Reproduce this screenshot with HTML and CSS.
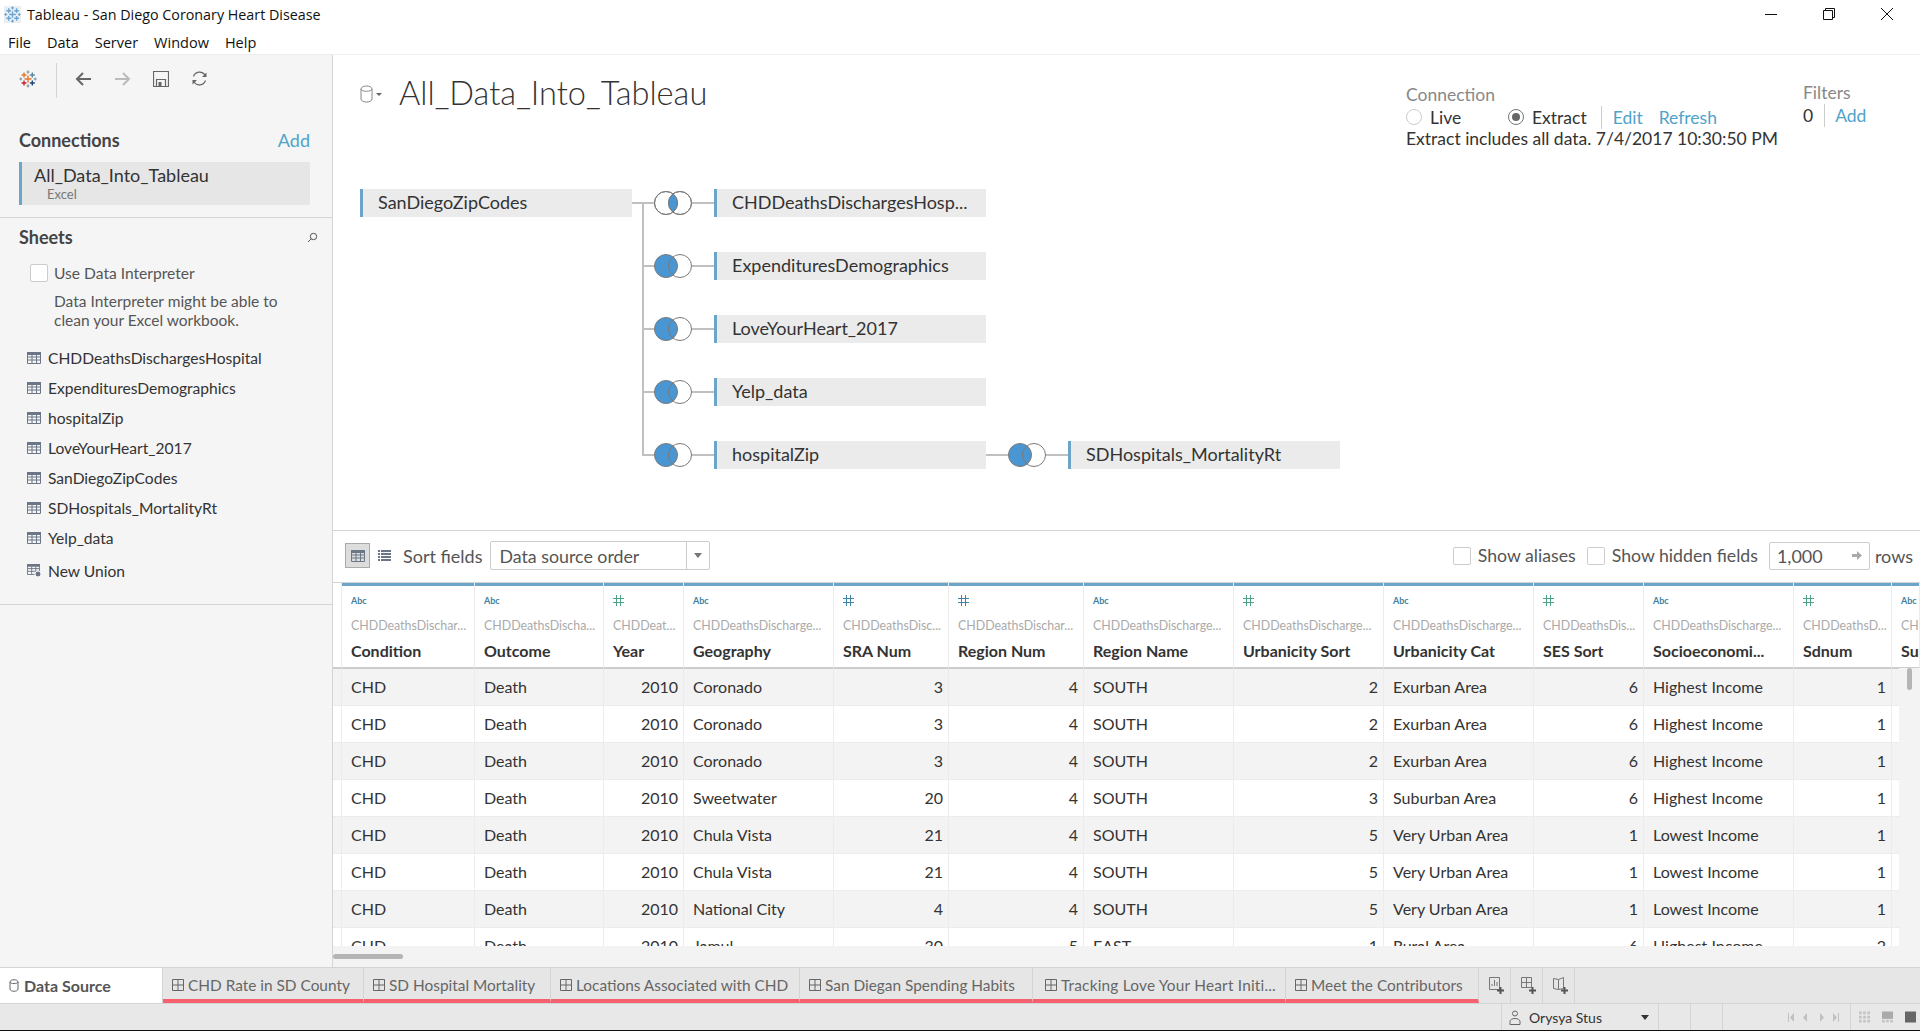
FILE: index.html
```html
<!DOCTYPE html>
<html lang="en">
<head>
    <meta charset="UTF-8">
    <title>Tableau - San Diego Coronary Heart Disease</title>
    <link rel="stylesheet" href="styles.css">
</head>
<body>
    <svg class="defs" width="0" height="0">
        <symbol id="logo" viewBox="0 0 18 18">
            <path class="m-orange" d="M9 5.5v7M5.5 9h7M5 2.5v5M2.5 5h5"/>
            <path class="m-slate" d="M13.300 2.500v5M10.800 5h5"/>
            <path class="m-red" d="M5 10.500v5M2.500 13h5"/>
            <path class="m-navy" d="M13.300 10.500v5M10.800 13h5"/>
            <path class="m-small" d="M9 .5v3.200M7.500 2h3M9 14.300v3.200M7.500 16h3M1.800 7.400v3.200M.3 9h3M16.200 7.400v3.200M14.700 9h3"/>
        </symbol>
        <symbol id="i-table" viewBox="0 0 14 12">
            <path class="t-band" d="M0 0h14v3H0z"/>
            <path class="t-grid" d="M.5.5h13v11H.5zM.5 5h13M.5 8h13M5 3v8.500M9.500 3v8.500"/>
        </symbol>
        <symbol id="i-sheet" viewBox="0 0 12 12">
            <path class="s-line" d="M.5.5h11v11H.5zM6 .5v11M.5 6h11"/>
        </symbol>
        <symbol id="i-hash" viewBox="0 0 11 11">
            <path class="h-line" d="M3.500 0v11M7.500 0v11M0 3.500h11M0 7.500h11"/>
        </symbol>
        <symbol id="venn-inner" viewBox="0 0 38 24">
            <circle class="v-ring" cx="12" cy="12" r="11.500"/>
            <circle class="v-open" cx="26" cy="12" r="11.500"/>
            <path class="v-fill" d="M19 2.880A11.500 11.500 0 0 1 19 21.120A11.500 11.500 0 0 1 19 2.880z"/>
            <circle class="v-open" cx="12" cy="12" r="11.500"/>
            <circle class="v-open" cx="26" cy="12" r="11.500"/>
        </symbol>
        <symbol id="venn-left" viewBox="0 0 38 24">
            <circle class="v-ring" cx="26" cy="12" r="11.500"/>
            <circle class="v-ring v-fill" cx="12" cy="12" r="11.500"/>
            <path class="v-edge" d="M19 2.880A11.500 11.500 0 0 0 19 21.120"/>
        </symbol>
    </svg>

    <div class="titlebar">
        <svg class="app-icon" width="17" height="17"><use href="#logo"/></svg>
        <span class="app-title">Tableau - San Diego Coronary Heart Disease</span>
        <div class="win-btns">
            <svg width="14" height="14" viewBox="0 0 14 14"><path d="M1 7.500h12"/></svg>
            <svg width="14" height="14" viewBox="0 0 14 14"><path d="M1.500 3.500h9v9h-9zM3.500 3.500v-2h9v9h-2"/></svg>
            <svg width="14" height="14" viewBox="0 0 14 14"><path d="M1 1l12 12M13 1L1 13"/></svg>
        </div>
    </div>
    <div class="menubar">
        <span>File</span><span>Data</span><span>Server</span><span>Window</span><span>Help</span>
    </div>

    <div class="main">
        <aside class="sidebar">
            <div class="side-tools">
                <svg class="logo" width="18" height="18"><use href="#logo"/></svg>
                <span class="tool-sep"></span>
                <svg class="tool" width="17" height="16" viewBox="0 0 17 16"><path d="M16 8H2M8 2L2 8l6 6"/></svg>
                <svg class="tool tool-off" width="17" height="16" viewBox="0 0 17 16"><path d="M1 8h14M9 2l6 6-6 6"/></svg>
                <svg class="tool tool-thin" width="16" height="16" viewBox="0 0 16 16"><path d="M.5.5h15v15H.5zM3.500 15.500v-7h9v7"/><path class="tool-solid" d="M5.500 11h3v4.500h-3z"/></svg>
                <svg class="tool tool-thin" width="17" height="17" viewBox="0 0 17 17"><path d="M2.500 6.500a6.500 6.500 0 0 1 11.500-1.500M14.500 10.500a6.500 6.500 0 0 1-11.500 1.500"/><path class="tool-solid" d="M15.500 2.500v4.500h-4.500zM1.500 14.500v-4.500h4.500z"/></svg>
            </div>

            <div class="side-head side-head-conn">
                <span>Connections</span>
                <a class="link link-add">Add</a>
            </div>
            <div class="conn-item">
                <div class="conn-name">All_Data_Into_Tableau</div>
                <div class="conn-type">Excel</div>
            </div>

            <div class="side-block">
                <div class="side-head side-head-sheets">
                    <span>Sheets</span>
                    <svg width="11" height="11" viewBox="0 0 11 11"><circle cx="6.500" cy="4.500" r="3.200"/><path d="M4.200 6.800L1 10"/></svg>
                </div>
                <label class="interp">
                    <span class="check"></span>
                    <span>Use Data Interpreter</span>
                </label>
                <p class="interp-note">Data Interpreter might be able to<br>clean your Excel workbook.</p>
                <ul class="sheet-list">
                    <li><svg width="14" height="12"><use href="#i-table"/></svg>CHDDeathsDischargesHospital</li>
                    <li><svg width="14" height="12"><use href="#i-table"/></svg>ExpendituresDemographics</li>
                    <li><svg width="14" height="12"><use href="#i-table"/></svg>hospitalZip</li>
                    <li><svg width="14" height="12"><use href="#i-table"/></svg>LoveYourHeart_2017</li>
                    <li><svg width="14" height="12"><use href="#i-table"/></svg>SanDiegoZipCodes</li>
                    <li><svg width="14" height="12"><use href="#i-table"/></svg>SDHospitals_MortalityRt</li>
                    <li><svg width="14" height="12"><use href="#i-table"/></svg>Yelp_data</li>
                    <li class="new-union">
                        <svg width="15" height="14" viewBox="0 0 15 14">
                            <use href="#i-table" width="13" height="11"/>
                            <circle class="gear" cx="11" cy="10" r="3"/>
                        </svg>New Union
                    </li>
                </ul>
            </div>
        </aside>

        <section class="content">
            <header class="ds-header">
                <svg class="db-icon" width="15" height="18" viewBox="0 0 15 18"><path d="M1 4c0-4 11-4 11 0v10c0 4-11 4-11 0zM1 4c0 3 11 3 11 0"/></svg>
                <span class="caret-small"></span>
                <h1 class="ds-title">All_Data_Into_Tableau</h1>
                <div class="conn-info">
                    <div class="label">Connection</div>
                    <div class="conn-opts">
                        <span class="radio"></span><span class="opt-live">Live</span>
                        <span class="radio radio-on"></span><span>Extract</span>
                        <span class="vsep"></span>
                        <a class="link">Edit</a>
                        <a class="link">Refresh</a>
                    </div>
                    <div class="extract-note">Extract includes all data. 7/4/2017 10:30:50 PM</div>
                </div>
                <div class="filters">
                    <div class="label">Filters</div>
                    <div class="filter-row">
                        <span>0</span><span class="vsep"></span><a class="link">Add</a>
                    </div>
                </div>
            </header>

            <div class="diagram">
                <div class="join-row">
                    <div class="node">SanDiegoZipCodes</div>
                    <span class="wire"></span>
                    <svg class="venn" width="38" height="24"><use href="#venn-inner"/></svg>
                    <span class="wire"></span>
                    <div class="node">CHDDeathsDischargesHosp...</div>
                </div>
                <div class="branches">
                    <div class="join-row">
                        <span class="wire wire-stub"></span>
                        <svg class="venn" width="38" height="24"><use href="#venn-left"/></svg>
                        <span class="wire"></span>
                        <div class="node">ExpendituresDemographics</div>
                    </div>
                    <div class="join-row">
                        <span class="wire wire-stub"></span>
                        <svg class="venn" width="38" height="24"><use href="#venn-left"/></svg>
                        <span class="wire"></span>
                        <div class="node">LoveYourHeart_2017</div>
                    </div>
                    <div class="join-row">
                        <span class="wire wire-stub"></span>
                        <svg class="venn" width="38" height="24"><use href="#venn-left"/></svg>
                        <span class="wire"></span>
                        <div class="node">Yelp_data</div>
                    </div>
                    <div class="join-row">
                        <span class="wire wire-stub"></span>
                        <svg class="venn" width="38" height="24"><use href="#venn-left"/></svg>
                        <span class="wire"></span>
                        <div class="node">hospitalZip</div>
                        <span class="wire"></span>
                        <svg class="venn" width="38" height="24"><use href="#venn-left"/></svg>
                        <span class="wire"></span>
                        <div class="node">SDHospitals_MortalityRt</div>
                    </div>
                </div>
            </div>

            <div class="grid-bar">
                <span class="view-btn view-btn-on"><svg width="14" height="12"><use href="#i-table"/></svg></span>
                <svg class="list-icon" width="13" height="11" viewBox="0 0 13 11"><path d="M0 0h2v2H0zM3 0h10v2H3zM0 3h2v2H0zM3 3h10v2H3zM0 6h2v2H0zM3 6h10v2H3zM0 9h2v2H0zM3 9h10v2H3z"/></svg>
                <span class="sort-label">Sort fields</span>
                <div class="select">
                    <span class="select-text">Data source order</span>
                    <span class="select-arrow"></span>
                </div>
                <label class="bar-check">
                    <span class="check"></span>Show aliases
                </label>
                <label class="bar-check bar-check-next">
                    <span class="check"></span>Show hidden fields
                </label>
                <div class="rows-input">
                    <span>1,000</span>
                    <svg width="10" height="9" viewBox="0 0 10 9"><path d="M0 3h5V0l5 4.500L5 9V6H0z"/></svg>
                </div>
                <span class="rows-label">rows</span>
            </div>

            <div class="grid-wrap">
                <table class="grid">
                    <colgroup>
                        <col class="c-pad"><col class="c-condition"><col class="c-outcome"><col class="c-year"><col class="c-wide"><col class="c-sra"><col class="c-region"><col class="c-wide"><col class="c-wide"><col class="c-wide"><col class="c-ses"><col class="c-wide"><col class="c-sdnum"><col class="c-last">
                    </colgroup>
                    <thead>
                        <tr>
                            <th class="pad"></th>
                            <th><div class="f-type abc">Abc</div><div class="f-src">CHDDeathsDischar...</div><div class="f-name">Condition</div></th>
                            <th><div class="f-type abc">Abc</div><div class="f-src">CHDDeathsDischa...</div><div class="f-name">Outcome</div></th>
                            <th><div class="f-type"><svg class="hash-green" width="11" height="11"><use href="#i-hash"/></svg></div><div class="f-src">CHDDeat...</div><div class="f-name">Year</div></th>
                            <th><div class="f-type abc">Abc</div><div class="f-src">CHDDeathsDischarge...</div><div class="f-name">Geography</div></th>
                            <th><div class="f-type"><svg class="hash-blue" width="11" height="11"><use href="#i-hash"/></svg></div><div class="f-src">CHDDeathsDisc...</div><div class="f-name">SRA Num</div></th>
                            <th><div class="f-type"><svg class="hash-blue" width="11" height="11"><use href="#i-hash"/></svg></div><div class="f-src">CHDDeathsDischar...</div><div class="f-name">Region Num</div></th>
                            <th><div class="f-type abc">Abc</div><div class="f-src">CHDDeathsDischarge...</div><div class="f-name">Region Name</div></th>
                            <th><div class="f-type"><svg class="hash-green" width="11" height="11"><use href="#i-hash"/></svg></div><div class="f-src">CHDDeathsDischarge...</div><div class="f-name">Urbanicity Sort</div></th>
                            <th><div class="f-type abc">Abc</div><div class="f-src">CHDDeathsDischarge...</div><div class="f-name">Urbanicity Cat</div></th>
                            <th><div class="f-type"><svg class="hash-green" width="11" height="11"><use href="#i-hash"/></svg></div><div class="f-src">CHDDeathsDis...</div><div class="f-name">SES Sort</div></th>
                            <th><div class="f-type abc">Abc</div><div class="f-src">CHDDeathsDischarge...</div><div class="f-name">Socioeconomi...</div></th>
                            <th><div class="f-type"><svg class="hash-green" width="11" height="11"><use href="#i-hash"/></svg></div><div class="f-src">CHDDeathsD...</div><div class="f-name">Sdnum</div></th>
                            <th><div class="f-type abc">Abc</div><div class="f-src">CHD</div><div class="f-name">Su</div></th>
                        </tr>
                    </thead>
                    <tbody>
                        <tr><td></td><td>CHD</td><td>Death</td><td class="num">2010</td><td>Coronado</td><td class="num">3</td><td class="num">4</td><td>SOUTH</td><td class="num">2</td><td>Exurban Area</td><td class="num">6</td><td>Highest Income</td><td class="num">1</td><td></td></tr>
                        <tr><td></td><td>CHD</td><td>Death</td><td class="num">2010</td><td>Coronado</td><td class="num">3</td><td class="num">4</td><td>SOUTH</td><td class="num">2</td><td>Exurban Area</td><td class="num">6</td><td>Highest Income</td><td class="num">1</td><td></td></tr>
                        <tr><td></td><td>CHD</td><td>Death</td><td class="num">2010</td><td>Coronado</td><td class="num">3</td><td class="num">4</td><td>SOUTH</td><td class="num">2</td><td>Exurban Area</td><td class="num">6</td><td>Highest Income</td><td class="num">1</td><td></td></tr>
                        <tr><td></td><td>CHD</td><td>Death</td><td class="num">2010</td><td>Sweetwater</td><td class="num">20</td><td class="num">4</td><td>SOUTH</td><td class="num">3</td><td>Suburban Area</td><td class="num">6</td><td>Highest Income</td><td class="num">1</td><td></td></tr>
                        <tr><td></td><td>CHD</td><td>Death</td><td class="num">2010</td><td>Chula Vista</td><td class="num">21</td><td class="num">4</td><td>SOUTH</td><td class="num">5</td><td>Very Urban Area</td><td class="num">1</td><td>Lowest Income</td><td class="num">1</td><td></td></tr>
                        <tr><td></td><td>CHD</td><td>Death</td><td class="num">2010</td><td>Chula Vista</td><td class="num">21</td><td class="num">4</td><td>SOUTH</td><td class="num">5</td><td>Very Urban Area</td><td class="num">1</td><td>Lowest Income</td><td class="num">1</td><td></td></tr>
                        <tr><td></td><td>CHD</td><td>Death</td><td class="num">2010</td><td>National City</td><td class="num">4</td><td class="num">4</td><td>SOUTH</td><td class="num">5</td><td>Very Urban Area</td><td class="num">1</td><td>Lowest Income</td><td class="num">1</td><td></td></tr>
                        <tr><td></td><td>CHD</td><td>Death</td><td class="num">2010</td><td>Jamul</td><td class="num">30</td><td class="num">5</td><td>EAST</td><td class="num">1</td><td>Rural Area</td><td class="num">6</td><td>Highest Income</td><td class="num">2</td><td></td></tr>
                    </tbody>
                </table>
                <div class="vscroll"><span class="vthumb"></span></div>
            </div>
            <div class="hscroll"><span class="hthumb"></span></div>
        </section>
    </div>

    <nav class="tabs">
        <div class="tab tab-source">
            <svg width="10" height="13" viewBox="0 0 10 13"><path d="M1 3c0-3 8-3 8 0v7c0 3-8 3-8 0zM1 3c0 2 8 2 8 0"/></svg>
            Data Source
        </div>
        <div class="tab tab-chd"><svg width="12" height="12"><use href="#i-sheet"/></svg>CHD Rate in SD County</div>
        <div class="tab tab-mort"><svg width="12" height="12"><use href="#i-sheet"/></svg>SD Hospital Mortality</div>
        <div class="tab tab-loc"><svg width="12" height="12"><use href="#i-sheet"/></svg>Locations Associated with CHD</div>
        <div class="tab tab-spend"><svg width="12" height="12"><use href="#i-sheet"/></svg>San Diegan Spending Habits</div>
        <div class="tab tab-love"><svg width="12" height="12"><use href="#i-sheet"/></svg>Tracking Love Your Heart Initi...</div>
        <div class="tab tab-meet"><svg width="12" height="12"><use href="#i-sheet"/></svg>Meet the Contributors</div>
        <div class="tab-add">
            <svg width="16" height="18" viewBox="0 0 16 18"><path class="add-thin" d="M.5.500h10v12H.5zM3 9V7M5.500 9V3M8 9V5"/><path class="add-plus" d="M11.500 10v7M8 13.500h7"/></svg>
        </div>
        <div class="tab-add">
            <svg width="16" height="18" viewBox="0 0 16 18"><path class="add-thin" d="M.5.500h10v10H.5zM5.500.5v10M.5 5.500h10"/><path class="add-plus" d="M11.500 10v7M8 13.500h7"/></svg>
        </div>
        <div class="tab-add">
            <svg width="16" height="18" viewBox="0 0 16 18"><path class="add-thin" d="M.5 1.500l5 1 5-2v11l-5 1-5-1zM5.500 2.500v10"/><path class="add-plus" d="M11.500 10v7M8 13.500h7"/></svg>
        </div>
    </nav>

    <footer class="status">
        <div class="st-cell st-user">
            <svg width="12" height="15" viewBox="0 0 12 15"><circle cx="6" cy="3.500" r="2.500"/><path d="M1 14.500v-3c0-4 10-4 10 0v3z"/></svg>
            <span class="st-name">Orysya Stus</span>
            <span class="st-caret"></span>
        </div>
        <div class="st-cell st-blank"></div>
        <div class="st-cell st-blank"></div>
        <div class="st-cell st-gap"></div>
        <div class="st-cell st-nav">
            <svg width="52" height="9" viewBox="0 0 52 9"><path d="M0 0h1v9H0zM6 0v9L2 4.500zM19 0v9l-4-4.500zM32 0v9l4-4.500zM45 0v9l4-4.500zM50 0h1v9h-1z"/></svg>
        </div>
        <div class="st-cell st-views">
            <svg width="11" height="12" viewBox="0 0 12 12"><path class="v-light" d="M0 0h3v3H0zM4.500 0h3v3h-3zM9 0h3v3H9zM0 4.500h3v3H0zM4.500 4.500h3v3h-3zM9 4.500h3v3H9zM0 9h3v3H0zM4.500 9h3v3h-3zM9 9h3v3H9z"/></svg>
            <svg width="11" height="12" viewBox="0 0 12 12"><path class="v-mid" d="M0 0h12v8H0z"/><path class="v-light" d="M0 9h3v3H0zM4.500 9h3v3h-3zM9 9h3v3H9z"/></svg>
            <svg width="11" height="12" viewBox="0 0 12 12"><path class="v-dark" d="M0 0h12v12H0z"/></svg>
        </div>
    </footer>
</body>
</html>
```

FILE: styles.css
```css
* {
    box-sizing: border-box;
}

html, body {
    margin: 0;
    height: 100%;
}

body {
    font-family: "Lato", "Open Sans", sans-serif;
    color: #333;
    background-color: #fff;
    display: flex;
    flex-direction: column;
    height: 1031px;
    overflow: hidden;
    border-bottom: 1px solid #111;
}

.defs {
    position: absolute;
}

.m-orange, .m-slate, .m-red, .m-navy, .m-small {
    fill: none;
    stroke-width: 1.4;
}
.m-orange { stroke: var(--mark, #e8762b); }
.m-slate { stroke: var(--mark, #5b879b); }
.m-red { stroke: var(--mark, #c72035); }
.m-navy { stroke: var(--mark, #1f447a); }
.m-small { stroke: var(--mark, #7099a6); stroke-width: 1.1; }

.t-band { fill: #6b7686; }
.t-grid { fill: none; stroke: #6b7686; stroke-width: 1; }
.s-line { fill: none; stroke: #666; stroke-width: 1; }
.h-line { fill: none; stroke: currentColor; stroke-width: 1; }
.v-ring { fill: #fff; stroke: #7a7a7a; stroke-width: 1; }
.v-open { fill: none; stroke: #7a7a7a; stroke-width: 1; }
.v-ring.v-fill, .v-fill { fill: #4a96d2; }
.v-edge { fill: none; stroke: #7a7a7a; stroke-width: 1; }

/* title and menu */
.titlebar {
    height: 28px;
    display: flex;
    align-items: center;
    padding-left: 4px;
    font-family: "Open Sans", sans-serif;
    font-size: 14.300px;
    color: #111;
}

.app-icon {
    --mark: #6ea5cf;
    background-color: #e8eef3;
}

.app-title {
    margin-left: 6px;
}

.win-btns {
    margin-left: auto;
    display: flex;
    gap: 44px;
    padding-right: 26px;
}

.win-btns svg {
    fill: none;
    stroke: #111;
    stroke-width: 1;
}

.menubar {
    height: 27px;
    display: flex;
    align-items: center;
    gap: 16px;
    padding: 2px 0 0 8px;
    font-family: "Open Sans", sans-serif;
    font-size: 14.500px;
    color: #111;
    border-bottom: 1px solid #eee;
}

.main {
    display: flex;
    flex: 1;
    min-height: 0;
}

/* left panel */
.sidebar {
    width: 333px;
    flex-shrink: 0;
    background-color: #f5f5f5;
    border-right: 1px solid #d4d4d4;
}

.side-tools {
    display: flex;
    align-items: center;
    height: 35px;
    margin-top: 8px;
    padding-left: 19px;
}

.side-tools svg {
    margin-bottom: 4px;
}

.tool-sep {
    width: 1px;
    height: 35px;
    background-color: #d4d4d4;
    margin: 0 18px 0 19px;
}

.tool {
    fill: none;
    stroke: #666;
    stroke-width: 2;
    margin-right: 22px;
}

.tool-off {
    stroke: #bbb;
}

.tool-thin {
    stroke: #666;
    stroke-width: 1.2;
}

.tool-solid {
    fill: #666;
    stroke: none;
}

.side-head {
    display: flex;
    justify-content: space-between;
    align-items: center;
    font-size: 18px;
    font-weight: 700;
    color: #444;
    padding: 0 22px 0 19px;
}

.side-head-conn {
    height: 24px;
    margin-top: 30px;
}

.link {
    color: #4fa3c9;
    font-weight: 400;
}

.link-add {
    font-size: 18px;
}

.conn-item {
    height: 43px;
    margin: 10px 22px 0 19px;
    padding: 3px 0 0 12px;
    background-color: #e6e6e6;
    border-left: 3px solid #6ba5c8;
}

.conn-name {
    font-size: 18px;
    line-height: 21px;
}

.conn-type {
    font-size: 13px;
    line-height: 17px;
    color: #777;
    padding-left: 13px;
}

.side-block {
    margin-top: 12px;
    padding-bottom: 18px;
    border-top: 1px solid #d4d4d4;
    border-bottom: 1px solid #d4d4d4;
}

.side-head-sheets {
    height: 38px;
    padding-right: 14px;
}

.side-head-sheets svg {
    fill: none;
    stroke: #555;
    stroke-width: 1;
}

.interp {
    display: flex;
    align-items: center;
    gap: 6px;
    margin: 8px 0 0 30px;
    font-size: 15.600px;
    color: #555;
}

.check {
    display: inline-block;
    width: 18px;
    height: 18px;
    background-color: #fff;
    border: 1px solid #ccc;
    border-radius: 2px;
    flex-shrink: 0;
}

.interp-note {
    margin: 10px 0 0 54px;
    font-size: 15.500px;
    line-height: 19px;
    color: #555;
}

.sheet-list {
    list-style: none;
    margin: 13px 0 0;
    padding: 0 0 0 27px;
    font-size: 15.600px;
}

.sheet-list li {
    display: flex;
    align-items: center;
    gap: 7px;
    height: 30px;
}

.sheet-list .new-union {
    margin-top: 3px;
    gap: 6px;
}

.gear {
    fill: #6b7686;
    stroke: #f5f5f5;
    stroke-width: 1;
}

/* data source header */
.content {
    flex: 1;
    min-width: 0;
    display: flex;
    flex-direction: column;
}

.ds-header {
    height: 134px;
    flex-shrink: 0;
    display: flex;
    align-items: flex-start;
    padding-left: 27px;
    position: relative;
}

.db-icon {
    fill: none;
    stroke: #888;
    stroke-width: 1;
    margin-top: 30px;
}

.caret-small {
    width: 0;
    height: 0;
    margin: 38px 0 0 1px;
    border-left: 3px solid transparent;
    border-right: 3px solid transparent;
    border-top: 3px solid #666;
}

.ds-title {
    margin: 17px 0 0 17px;
    font-size: 32.600px;
    line-height: 42px;
    font-weight: 300;
    color: #333;
}

.conn-info {
    margin-left: auto;
    width: 397px;
    padding-top: 29px;
    font-size: 17.500px;
}

.label {
    color: #888;
    line-height: 22px;
}

.conn-opts {
    display: flex;
    align-items: center;
    height: 22px;
}

.radio {
    width: 16px;
    height: 16px;
    border: 1px solid #ccc;
    border-radius: 50%;
    background-color: #fff;
    margin-right: 8px;
    position: relative;
}

.radio-on {
    border-color: #777;
}

.radio-on::after {
    content: "";
    position: absolute;
    left: 3px;
    top: 3px;
    width: 8px;
    height: 8px;
    border-radius: 50%;
    background-color: #666;
}

.opt-live {
    width: 78px;
}

.vsep {
    width: 1px;
    height: 23px;
    background-color: #ccc;
    margin: 0 11px 0 14px;
}

.conn-opts .link + .link {
    margin-left: 16px;
}

.extract-note {
    line-height: 22px;
}

.filters {
    width: 117px;
    padding-top: 27px;
    font-size: 17.500px;
}

.filter-row {
    display: flex;
    align-items: center;
    height: 23px;
}

.filter-row .vsep {
    margin: 0 10px 0 11px;
}

/* join diagram */
.diagram {
    flex: 1;
    padding-left: 27px;
    font-size: 18px;
}

.join-row {
    display: flex;
    align-items: center;
    height: 28px;
}

.node {
    width: 272px;
    height: 28px;
    flex-shrink: 0;
    padding-left: 15px;
    line-height: 27px;
    white-space: nowrap;
    background-color: #ebebeb;
    border-left: 3px solid #6ba5c8;
}

.wire {
    width: 22px;
    height: 2px;
    flex-shrink: 0;
    background-color: #c0c0c0;
}

.wire-stub {
    width: 12px;
}

.venn {
    flex-shrink: 0;
}

.branches {
    position: relative;
    display: flex;
    flex-direction: column;
    margin-left: 282px;
}

.branches::before {
    content: "";
    position: absolute;
    left: 0;
    top: -14px;
    width: 2px;
    height: 253px;
    background-color: #c0c0c0;
}

.branches .join-row {
    margin-top: 35px;
}

/* table toolbar */
.grid-bar {
    height: 52px;
    flex-shrink: 0;
    display: flex;
    align-items: center;
    padding: 0 0 2px 12px;
    border-top: 1px solid #d4d4d4;
    font-size: 18px;
    color: #555;
}

.view-btn {
    width: 25px;
    height: 25px;
    display: flex;
    align-items: center;
    justify-content: center;
}

.view-btn-on {
    background-color: #ddd;
    border: 1px solid #aaa;
}

.list-icon {
    fill: #6b7686;
    margin-left: 8px;
}

.sort-label {
    margin-left: 12px;
}

.select {
    width: 220px;
    height: 29px;
    margin-left: 8px;
    display: flex;
    align-items: center;
    padding-left: 8px;
    border: 1px solid #ccc;
    border-radius: 2px;
    font-size: 17.800px;
    position: relative;
}

.select-arrow {
    position: absolute;
    right: 0;
    top: 0;
    width: 23px;
    height: 27px;
    border-left: 1px solid #ccc;
}

.select-arrow::after {
    content: "";
    position: absolute;
    left: 7px;
    top: 11px;
    border-left: 4px solid transparent;
    border-right: 4px solid transparent;
    border-top: 5px solid #777;
}

.bar-check {
    display: flex;
    align-items: center;
    gap: 7px;
    margin-left: auto;
    font-size: 17.700px;
}

.bar-check-next {
    margin-left: 11px;
}

.rows-input {
    width: 101px;
    height: 28px;
    margin-left: 11px;
    display: flex;
    align-items: center;
    justify-content: space-between;
    padding: 0 7px 0 7px;
    border: 1px solid #ccc;
    border-radius: 2px;
}

.rows-input svg {
    fill: #aaa;
}

.rows-label {
    margin: 0 7px 0 5px;
}

/* data grid */
.grid-wrap {
    height: 364px;
    flex-shrink: 0;
    overflow: hidden;
    position: relative;
    border-top: 1px solid #d4d4d4;
}

.grid {
    border-collapse: separate;
    border-spacing: 0;
    table-layout: fixed;
    width: 1587px;
    font-size: 16px;
}

.c-pad { width: 9px; }
.c-condition { width: 133px; }
.c-outcome { width: 129px; }
.c-year { width: 80px; }
.c-wide { width: 150px; }
.c-sra { width: 115px; }
.c-region { width: 135px; }
.c-ses { width: 110px; }
.c-sdnum { width: 98px; }
.c-last { width: 28px; }

.grid th {
    height: 86px;
    padding: 0 0 0 9px;
    text-align: left;
    vertical-align: top;
    overflow: hidden;
    white-space: nowrap;
    background: linear-gradient(#6ba5c8 3px, #fff 3px);
    background-clip: padding-box;
    border-right: 1px solid #ececec;
    border-bottom: 2px solid #ccc;
}

.grid th.pad {
    background: #fff;
    padding: 0;
}

.f-type {
    height: 11px;
    margin-top: 12px;
    line-height: 11px;
}

.abc {
    font-size: 9px;
    font-weight: 700;
    color: #3f7f9f;
}

.hash-green { color: #4ea482; display: block; }
.hash-blue { color: #3f85a8; display: block; }

.f-src {
    margin-top: 12px;
    font-size: 12.400px;
    font-weight: 400;
    line-height: 16px;
    color: #aaa;
}

.f-name {
    margin-top: 7px;
    font-size: 16px;
    font-weight: 700;
    line-height: 20px;
    color: #333;
}

.grid td {
    height: 37px;
    padding: 0 5px 2px 9px;
    overflow: hidden;
    white-space: nowrap;
    border-right: 1px solid #ececec;
    border-bottom: 1px solid #ececec;
}

.grid td.num {
    text-align: right;
}

.grid tbody tr:nth-child(odd) td {
    background-color: #f3f3f3;
}

.vscroll {
    position: absolute;
    right: 0;
    top: 85px;
    bottom: 0;
    width: 21px;
    background-color: #f3f3f3;
}

.vthumb {
    position: absolute;
    left: 8px;
    top: 0;
    width: 5px;
    height: 22px;
    border-radius: 3px;
    background-color: #b5b5b5;
}

.hscroll {
    height: 21px;
    flex-shrink: 0;
    background-color: #f3f3f3;
    padding-top: 8px;
}

.hthumb {
    display: block;
    width: 70px;
    height: 5px;
    border-radius: 3px;
    background-color: #b5b5b5;
}

/* sheet tabs */
.tabs {
    height: 37px;
    flex-shrink: 0;
    display: flex;
    background-color: #e6e6e6;
    border-top: 1px solid #d4d4d4;
    border-bottom: 1px solid #d4d4d4;
    font-size: 15.400px;
    color: #666;
}

.tab {
    display: flex;
    align-items: center;
    gap: 4px;
    padding: 2px 0 0 9px;
    white-space: nowrap;
    border-right: 1px solid #d4d4d4;
    border-bottom: 4px solid #f6616f;
}

.tab svg {
    flex-shrink: 0;
}

.tab-source {
    width: 163px;
    padding-top: 0;
    gap: 5px;
    background-color: #fff;
    color: #555;
    font-size: 16px;
    font-weight: 700;
    border-bottom: 0;
}

.tab-source svg {
    fill: none;
    stroke: #666;
    stroke-width: 1;
}

.tab-chd { width: 201px; }
.tab-mort { width: 187px; }
.tab-loc { width: 249px; }
.tab-spend { width: 233px; }
.tab-love { width: 253px; padding-left: 12px; letter-spacing: .2px; }
.tab-meet { width: 193px; }

.tab-add {
    width: 32px;
    display: flex;
    align-items: center;
    justify-content: center;
    padding-left: 4px;
    border-right: 1px solid #d4d4d4;
}

.add-thin {
    fill: none;
    stroke: #777;
    stroke-width: 1;
}

.add-plus {
    fill: none;
    stroke: #555;
    stroke-width: 2;
}

/* status bar */
.status {
    height: 26px;
    flex-shrink: 0;
    display: flex;
    justify-content: flex-end;
    background-color: #e8e8e8;
    font-size: 14px;
}

.st-cell {
    display: flex;
    align-items: center;
    border-left: 1px solid #d4d4d4;
}

.st-user {
    width: 157px;
    padding-left: 7px;
}

.st-user svg {
    fill: none;
    stroke: #666;
    stroke-width: 1;
}

.st-name {
    margin-left: 8px;
}

.st-caret {
    margin-left: auto;
    margin-right: 9px;
    border-left: 4px solid transparent;
    border-right: 4px solid transparent;
    border-top: 5px solid #333;
}

.st-blank {
    width: 32px;
}

.st-gap {
    width: 57px;
}

.st-nav {
    width: 71px;
    padding-left: 9px;
    border-left: 0;
}

.st-nav svg {
    fill: #c0c0c0;
}

.st-views {
    width: 70px;
    gap: 12px;
    padding-left: 8px;
}

.v-light { fill: #c4c4c4; }
.v-mid { fill: #aaa; }
.v-dark { fill: #666; }
```
